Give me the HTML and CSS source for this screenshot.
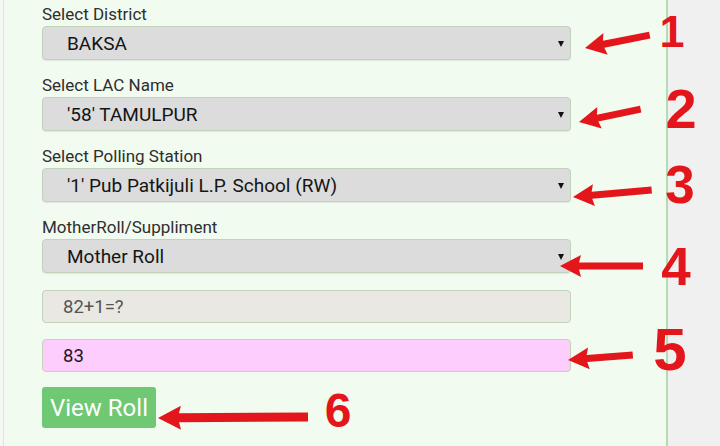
FILE: index.html
```html
<!DOCTYPE html>
<html>
<head>
<meta charset="utf-8">
<link rel="stylesheet" href="styles.css">
</head>
<body>
<div class="page">
  <div class="panel">
    <form class="form">
      <div class="field">
        <label class="label">Select District</label>
        <div class="select-wrap"><select class="select"><option>BAKSA</option></select></div>
      </div>
      <div class="field">
        <label class="label">Select LAC Name</label>
        <div class="select-wrap"><select class="select"><option>'58' TAMULPUR</option></select></div>
      </div>
      <div class="field">
        <label class="label">Select Polling Station</label>
        <div class="select-wrap"><select class="select"><option>'1' Pub Patkijuli L.P. School (RW)</option></select></div>
      </div>
      <div class="field">
        <label class="label">MotherRoll/Suppliment</label>
        <div class="select-wrap"><select class="select"><option>Mother Roll</option></select></div>
      </div>
      <input class="input captcha" type="text" value="82+1=?" readonly>
      <input class="input answer" type="text" value="83">
      <button class="btn" type="button">View Roll</button>
    </form>
  </div>
  <div class="side"></div>
</div>
<svg class="marks" width="720" height="446" viewBox="0 0 720 446">
  <g fill="#e3161b">
    <polygon transform="translate(585 48) rotate(-11.3)" points="0,0 21,-11 19,-3.5 66,-3.5 66,3.5 19,3.5 21,11"/>
    <polygon transform="translate(579 122) rotate(-11.8)" points="0,0 21,-11 19,-3.5 63,-3.5 63,3.5 19,3.5 21,11"/>
    <polygon transform="translate(573 197) rotate(-5.1)" points="0,0 21,-11 19,-3.5 79,-3.5 79,3.5 19,3.5 21,11"/>
    <polygon transform="translate(560 266) rotate(0)" points="0,0 21,-11 19,-3.5 83,-3.5 83,3.5 19,3.5 21,11"/>
    <polygon transform="translate(568 360) rotate(-4.4)" points="0,0 21,-11 19,-3.5 65,-3.5 65,3.5 19,3.5 21,11"/>
    <polygon transform="translate(158 418) rotate(-0.4)" points="0,0 23,-12 21,-4.5 150,-4.5 150,4.5 21,4.5 23,12"/>
  </g>
  <g class="digits" fill="#e3161b" text-anchor="middle">
    <text x="672" y="47" font-size="45">1</text>
    <text x="681" y="128" font-size="56">2</text>
    <text x="680" y="203" font-size="53">3</text>
    <text x="676" y="285" font-size="53">4</text>
    <text x="670" y="370" font-size="60">5</text>
    <text x="338" y="427" font-size="48">6</text>
  </g>
</svg>
</body>
</html>
```
FILE: styles.css
```css
html, body {
  margin: 0;
  padding: 0;
}
body {
  width: 720px;
  height: 446px;
  overflow: hidden;
  background: #f0f0f0;
  font-family: Roboto, "Liberation Sans", sans-serif;
  position: relative;
}
.page {
  display: flex;
  height: 446px;
  background: #f4f8f3;
}
.panel {
  margin-left: 3px;
  width: 624px;
  padding: 4px 0 0 38px;
  background: #f1fbf0;
  border-left: 1px solid #dce9da;
  border-right: 2px solid #b5dbb4;
}
.side {
  flex: 1;
  background: #f0f0f0;
}
.form {
  width: 529px;
  display: flex;
  flex-direction: column;
}
.field {
  display: flex;
  flex-direction: column;
  gap: 2px;
  margin-bottom: 15px;
}
.label {
  font-size: 17px;
  line-height: 20px;
  color: #2e2e2e;
}
.select-wrap {
  position: relative;
}
.select-wrap::after {
  content: "";
  position: absolute;
  right: 7px;
  top: 15px;
  border-left: 3.5px solid transparent;
  border-right: 3.5px solid transparent;
  border-top: 6px solid #111;
}
.select {
  appearance: none;
  -webkit-appearance: none;
  display: block;
  width: 100%;
  height: 34px;
  margin: 0;
  padding: 0 0 0 24px;
  border: 1px solid #c3d2bb;
  border-radius: 4px;
  background: #dcdcdc;
  box-shadow: 0 1px 1px rgba(0,0,0,0.08);
  font-family: Roboto, "Liberation Sans", sans-serif;
  font-size: 19px;
  color: #151515;
}
.input {
  display: block;
  box-sizing: border-box;
  width: 100%;
  height: 33px;
  margin: 0 0 16px 0;
  padding: 0 0 0 20px;
  border: 1px solid #c3d2bb;
  border-radius: 4px;
  font-family: Roboto, "Liberation Sans", sans-serif;
  font-size: 18.5px;
  outline: none;
}
.captcha {
  margin-top: 2px;
  background: #e9e8e3;
  color: #555;
}
.answer {
  background: #fdcdfd;
  color: #201528;
  margin-bottom: 15px;
}
.btn {
  align-self: flex-start;
  width: 114px;
  height: 41px;
  padding: 0;
  border: none;
  border-radius: 3px;
  background: #6fc873;
  color: #fff;
  font-family: Roboto, "Liberation Sans", sans-serif;
  font-size: 24px;
}
.marks {
  position: absolute;
  left: 0;
  top: 0;
  pointer-events: none;
}
.digits {
  font-family: "Liberation Sans", Arial, sans-serif;
  font-weight: bold;
}
```
